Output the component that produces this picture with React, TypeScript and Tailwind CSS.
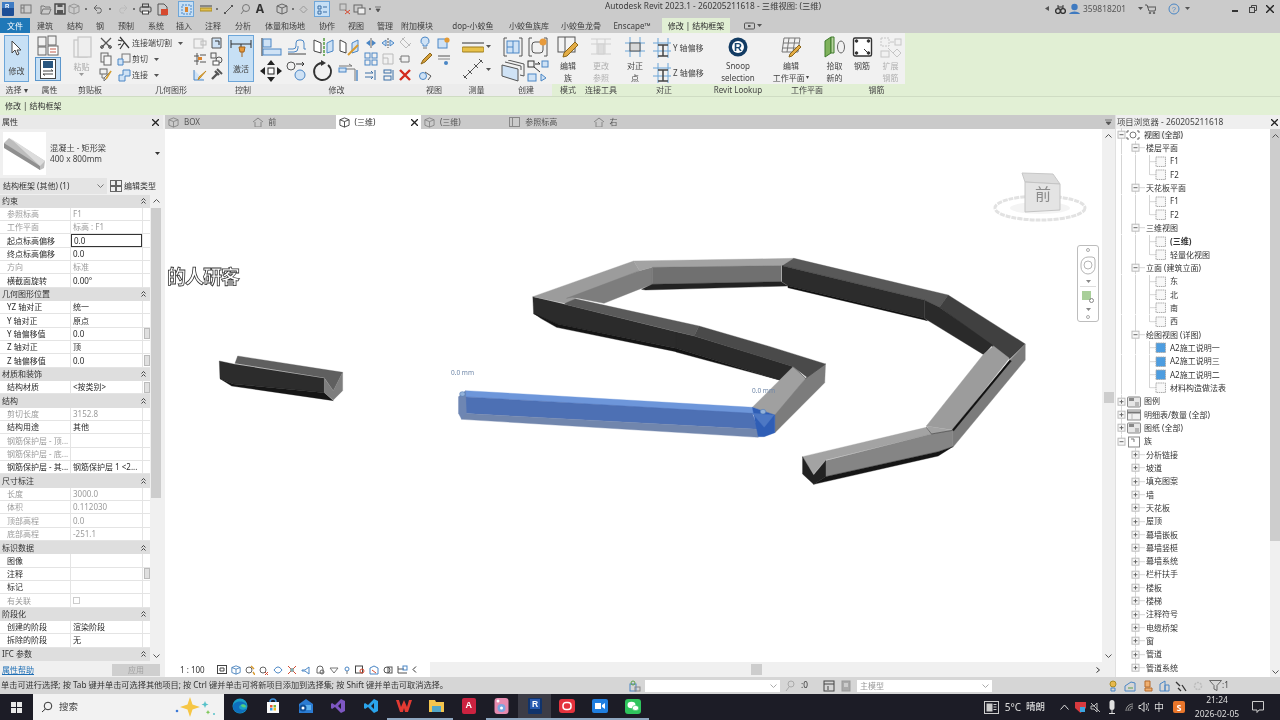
import React from "react";

const FONT = "font-['Noto_Sans','Noto_Sans_CJK_SC',sans-serif]";

type SP = { w?: number; h?: number; children?: React.ReactNode };
const G = ({ w = 14, h = 14, children }: SP) => (
  <svg width={w} height={h} viewBox={`0 0 ${w} ${h}`} className="shrink-0" fill="none" stroke="#555" strokeWidth="1">
    {children}
  </svg>
);
const B = "#4a86c5";
const LB = "#cfe2f5";
const Dot = () => <span className="mx-[1px] inline-block h-[2px] w-[2px] shrink-0 rounded-full bg-[#555]" />;
const Caret = ({ c = "#555" }: { c?: string }) => (
  <svg width="5" height="3" viewBox="0 0 5 3" className="shrink-0"><path d="M0 0h5L2.5 3z" fill={c} /></svg>
);

/* ---------- title bar ---------- */
const Cube = ({ s = 12, c = "#777" }: { s?: number; c?: string }) => (
  <svg width={s} height={s} viewBox="0 0 12 12" fill="none" stroke={c} className="shrink-0">
    <path d="M6 1l5 2v6l-5 2-5-2V3zM1 3l5 2 5-2M6 5v6" />
  </svg>
);

function QatBar() {
  const cell = (w: number, n: React.ReactNode, k: number) => (
    <div key={k} style={{ width: w }} className="flex shrink-0 items-center justify-center">{n}</div>
  );
  const items: [number, React.ReactNode][] = [
    [16, <svg width="12" height="14" viewBox="0 0 12 14"><rect width="12" height="14" rx="1" fill="#1d4f96" /><rect y="0" width="12" height="6" fill="#3f7cc4" /><text x="3" y="6" fontSize="6" fontFamily="Liberation Sans" fontWeight="700" fill="#fff">R</text></svg>],
    [20, <G w={12} h={12}><rect x="1" y="2" width="10" height="8" stroke="#777" /><path d="M4 2v8M1 5h3" stroke="#777" /></G>],
    [3, <span />],
    [13, <G w={12} h={11}><path d="M1 10V2h3l1 1h5v1M1 10l2-5h8l-2 5z" stroke="#777" /></G>],
    [15, <G w={12} h={12}><rect x="1" y="1" width="10" height="10" stroke="#444" strokeWidth="1.4" /><rect x="3.5" y="1" width="5" height="3" fill="#555" stroke="none" /><rect x="3" y="7" width="6" height="4" fill="#555" stroke="none" /></G>],
    [13, <Cube c="#999" />],
    [11, <Dot />],
    [14, <G w={12} h={10}><path d="M2 4h6a3 3 0 010 5H5M2 4l3-3M2 4l3 3" stroke="#666" /></G>],
    [9, <Dot />],
    [17, <G w={12} h={10}><path d="M10 4H4a3 3 0 000 5h3M10 4L7 1M10 4L7 7" stroke="#bbb" /></G>],
    [5, <Dot />],
    [18, <G w={13} h={12}><rect x="1" y="4" width="11" height="5" rx="1" stroke="#444" /><rect x="3.5" y="1" width="6" height="3" stroke="#444" /><rect x="3.5" y="8" width="6" height="3" stroke="#444" fill="#fff" /></G>],
    [16, <G w={13} h={13}><path d="M2 1h6l3 3v8H2z" stroke="#555" /><rect x="5" y="6" width="7" height="6" fill="#d6492f" stroke="none" /></G>],
    [8, <span />],
    [16, <div className="flex h-[16px] w-[16px] items-center justify-center border border-[#6fa6d8] bg-[#c6dff5]"><G w={11} h={11}><rect x="1" y="1" width="9" height="9" stroke="#4a86c5" strokeDasharray="2 1" /><rect x="4" y="3" width="3" height="5" fill="#d9832e" stroke="none" /></G></div>],
    [5, <span />],
    [13, <G w={12} h={8}><rect x="0" y="3" width="12" height="3" fill="#e3c04f" stroke="#a98b22" /><path d="M0 1h12" stroke="#444" /></G>],
    [9, <Dot />],
    [14, <G w={11} h={11}><path d="M1 10L10 1M1 8l2 2M8 1l2 2" stroke="#555" /></G>],
    [20, <G w={12} h={12}><circle cx="7" cy="5" r="3.5" stroke="#777" /><path d="M2 11l3-4" stroke="#777" /></G>],
    [10, <span className="text-[12px] leading-none font-bold text-[#333]">A</span>],
    [10, <span />],
    [13, <Cube c="#666" />],
    [9, <Dot />],
    [13, <G w={9} h={9}><path d="M4.5 1l3.5 3.5-3.5 3.5L1 4.5z" stroke="#999" /></G>],
    [4, <span />],
    [16, <div className="flex h-[16px] w-[16px] items-center justify-center border border-[#6fa6d8] bg-[#c6dff5]"><G w={11} h={11}><path d="M1 2h3v3H1zM1 7h3v3H1zM6 3h4M6 8h4" stroke="#3b6ea5" /></G></div>],
    [7, <span />],
    [15, <G w={12} h={12}><rect x="1" y="1" width="6" height="6" stroke="#888" /><path d="M6 7l5 4m0-4l-5 4" stroke="#d6492f" /></G>],
    [15, <G w={13} h={11}><rect x="1" y="1" width="8" height="7" stroke="#666" /><rect x="5" y="4" width="7" height="6" fill="#eee" stroke="#666" /></G>],
    [6, <Dot />],
    [10, <svg width="6" height="6" viewBox="0 0 6 6"><path d="M0 1h6M1 3h4l-2 3z" stroke="#555" fill="#555" strokeWidth=".7" /></svg>],
  ];
  return <div className="flex h-[18px] w-[400px] shrink-0 items-center">{items.map(([w, n], i) => cell(w, n, i))}</div>;
}

function TitleBar() {
  return (
    <div className="relative flex h-[18px] items-center bg-[#cbcbcb]">
      <QatBar />
      <div className="mb-[5px] ml-[205px] whitespace-nowrap text-[8.300px] leading-none text-[#3a3a3a]">Autodesk Revit 2023.1 - 260205211618 - 三维视图: (三维)</div>
      <div className="ml-auto flex items-center text-[8.400px] text-[#555]">
        <svg width="4" height="5" viewBox="0 0 4 5" className="mr-[6px]"><path d="M4 0v5L0 2.5z" fill="#555" /></svg>
        <G w={11} h={10}><circle cx="3" cy="7" r="2.4" stroke="#333" strokeWidth="1.4" /><circle cx="8" cy="7" r="2.4" stroke="#333" strokeWidth="1.4" /><path d="M3 1v4M8 1v4M3 3h5" stroke="#333" /></G>
        <svg width="11" height="12" viewBox="0 0 11 12" className="ml-[3px]"><circle cx="5.5" cy="4" r="3.2" fill="#3f7ac0" /><path d="M0 11c1-3.5 10-3.5 11 0z" fill="#3f7ac0" /></svg>
        <span className="ml-[3px] w-[55px]">359818201</span>
        <Caret />
        <span className="w-[2px]" />
        <G w={11} h={10}><path d="M0 1h2l2 6h6l1-4H3" stroke="#555" /><circle cx="5" cy="9" r=".8" /><circle cx="9" cy="9" r=".8" /></G>
        <span className="w-[12px]" />
        <svg width="12" height="12" viewBox="0 0 12 12"><circle cx="6" cy="6" r="5" fill="none" stroke="#4a86c5" /><text x="4" y="8.5" fontSize="7" fill="#4a86c5" fontFamily="Liberation Sans">?</text></svg>
        <span className="w-[5px]" />
        <Caret />
        <span className="w-[42px]" />
        <span className="mt-[4px] h-[1.5px] w-[6px] bg-[#333]" />
        <span className="w-[11px]" />
        <G w={8} h={8}><rect x=".5" y="2.5" width="5" height="5" stroke="#444" /><path d="M2.5 2.5V.5h5v5h-2" stroke="#444" /></G>
        <span className="w-[9px]" />
        <G w={8} h={8}><path d="M0 0l8 8M8 0L0 8" stroke="#222" strokeWidth="1.4" /></G>
        <span className="w-[6px]" />
      </div>
    </div>
  );
}

const TABS: [string, number][] = [
  ["建筑", 30], ["结构", 30], ["钢", 20], ["预制", 32], ["系统", 28], ["插入", 28], ["注释", 30], ["分析", 30],
  ["体量和场地", 54], ["协作", 30], ["视图", 28], ["管理", 30], ["附加模块", 34], ["dop-小蛟鱼", 78], ["小蛟鱼族库", 34],
  ["小蛟鱼龙骨", 70], ["Enscape™", 32],
];

function TabBar() {
  return (
    <div className="flex h-[15px] items-stretch bg-[#cbcbcb] text-[8px] leading-none text-[#3d3d3d]">
      <div className="flex w-[30px] items-center justify-center bg-[#1f78b8] pt-[1px] text-white">文件</div>
      {TABS.map(([t, w]) => (
        <div key={t} style={{ width: w }} className="flex shrink-0 items-center justify-center whitespace-nowrap pt-[1px]">{t}</div>
      ))}
      <div className="ml-[14px] flex w-[68px] items-center justify-center whitespace-nowrap bg-[#e1efd4] pt-[1px] text-[#2c2c2c]">修改 | 结构框架</div>
      <div className="ml-[14px] flex items-center gap-[2px]">
        <G w={11} h={8}><rect x=".5" y="1" width="10" height="6" rx="1" stroke="#555" /><rect x="4" y="3" width="2.5" height="2" fill="#555" stroke="none" /></G>
        <Caret />
      </div>
    </div>
  );
}

/* ---------- ribbon ---------- */
function Panel({ w, label, green, children }: { w: number; label: string; green?: boolean; children?: React.ReactNode }) {
  return (
    <div style={{ width: w }} className="flex shrink-0 flex-col">
      <div className="flex h-[51px] items-stretch overflow-hidden">{children}</div>
      <div className={`flex h-[12px] items-center justify-center whitespace-nowrap text-[8px] leading-none text-[#444] ${green ? "bg-[#e1efd4]" : "bg-[#ececec]"}`}>{label}</div>
    </div>
  );
}
const Col3 = ({ w = 17, items }: { w?: number; items: React.ReactNode[] }) => (
  <div style={{ width: w }} className="flex shrink-0 flex-col items-center pt-[2px]">
    {items.map((n, i) => <div key={i} className="flex h-[16px] items-center justify-center">{n}</div>)}
  </div>
);
const TallBtn = ({ w, children }: { w: number; children?: React.ReactNode }) => (
  <div style={{ width: w }} className="flex shrink-0 flex-col items-center pt-[3px] text-center text-[8px] leading-[11.5px] text-[#444]">{children}</div>
);

const Sm = {
  cutX: <G><path d="M2 2l10 10M12 2L2 12" stroke="#555" strokeWidth="1.3" /><circle cx="3" cy="11" r="1.4" /><circle cx="11" cy="11" r="1.4" /></G>,
  copy: <G><rect x="2" y="1" width="7" height="9" stroke="#666" /><rect x="5" y="4" width="7" height="9" fill="#f5f5f5" stroke="#666" /></G>,
  brush: <G><rect x="1" y="1" width="7" height="5" stroke="#666" /><path d="M3 6v4h3M12 3l-5 8-2 2 0-3z" stroke="#777" /><path d="M12 3l-5 8" stroke="#d9a02e" strokeWidth="1.5" /></G>,
  joinCut: <G><path d="M3 1l9 11M3 13l4-6M1 4l4 1M1 9l3-1" stroke="#333" strokeWidth="1.2" /></G>,
  cut: <G><rect x="5" y="2" width="8" height="8" stroke="#777" /><path d="M1 13V7h5v6z" fill="#cfe2f5" stroke={B} /></G>,
  join: <G><path d="M2 13V7h4V2h7v6H8v5z" fill={LB} stroke={B} /></G>,
  wallOpen: <G><rect x="1" y="3" width="9" height="9" stroke="#bbb" /><rect x="8" y="5" width="5" height="4" stroke="#bbb" /></G>,
  wallCut: <G><path d="M2 2h9v10H2z" fill={LB} stroke="#555" /><path d="M5 5h4v4" stroke="#333" /></G>,
  align2: <G><path d="M1 4h5M1 9h5M4 1v12M7 3h6M7 10h6" stroke="#555" /><rect x="5" y="5" width="4" height="3" fill="#d9832e" stroke="none" /></G>,
  cope: <G><rect x="1" y="1" width="5" height="5" stroke="#555" /><circle cx="9" cy="8" r="3" stroke="#555" /><rect x="3" y="9" width="6" height="4" stroke="#555" fill="#fff" /></G>,
  paint: <G><path d="M1 2v10h10" stroke={B} fill={LB} /><path d="M13 3L7 10l-2 2 1-3z" stroke="#c58a21" fill="#eab54a" /></G>,
  hammer: <G><path d="M5 3l4 4M2 11l5-5" stroke="#555" strokeWidth="2.4" /><path d="M7 1l5 5" stroke="#555" strokeWidth="2" /></G>,
  alignH: <G><path d="M6 4L2 7l4 3zM8 4l4 3-4 3z" fill={B} stroke="none" /><path d="M7 2v10" stroke="#666" /></G>,
  splitH: <G><path d="M5 4L1 7l4 3zM9 4l4 3-4 3z" fill={LB} stroke={B} /><path d="M7 2v10" stroke="#555" strokeDasharray="2 1" /></G>,
  grid4: <G><rect x="1" y="1" width="5" height="5" stroke={B} /><rect x="8" y="1" width="5" height="5" stroke={B} /><rect x="1" y="8" width="5" height="5" stroke={B} /><rect x="8" y="8" width="5" height="5" stroke={B} /></G>,
  groupDim: <G><path d="M2 2h10v10H2zM2 6h5v6" stroke="#bbb" /></G>,
  pinOut: <G><path d="M3 4h8v6H3zM3 7H1" stroke="#777" /></G>,
  arrR: <G><path d="M1 5h8l-2-2M1 9h8l-2 2M11 2v10" stroke="#3b6ea5" /></G>,
  arrD: <G><rect x="3" y="2" width="7" height="3" stroke="#3b6ea5" /><rect x="3" y="8" width="7" height="4" stroke="#3b6ea5" /><path d="M12 2v10" stroke="#3b6ea5" /></G>,
  delX: <G><path d="M2 2l10 10M12 2L2 12" stroke="#d32b1e" strokeWidth="2.4" /></G>,
  pinGray: <G><path d="M4 2l8 8M7 1L2 6l6 6 5-5" stroke="#bbb" /></G>,
  bulb: <G><path d="M7 1a4 4 0 00-2 7.5V10h4V8.5A4 4 0 007 1z" fill={LB} stroke={B} /><path d="M5 12h4" stroke="#777" /></G>,
  gear: <G><rect x="1" y="3" width="9" height="9" fill={LB} stroke={B} /><circle cx="10" cy="4" r="2.6" fill="#e39a33" stroke="none" /></G>,
  brushY: <G><path d="M12 1L5 8 3 12l4-2 7-7z" fill="#d6a03a" stroke="#8a651a" /></G>,
  lines: <G><path d="M1 4h12" stroke="#555" /><path d="M1 7h12" stroke="#888" /><circle cx="9" cy="11" r="2" fill="#4a86c5" stroke="none" /></G>,
  pipes: <G><circle cx="5" cy="8" r="3.5" fill={LB} stroke={B} /><path d="M7 4l6 4-3 4" stroke="#555" /></G>,
};

function Ribbon() {
  return (
    <div className="flex h-[63px] shrink-0 items-stretch bg-[#e1efd4] text-[8px]">
      <div className="flex bg-[#f1f1f1]">
        <Panel w={33} label="选择  ▾">
          <div className="mt-[2px] ml-[4px] flex h-[47px] w-[25px] flex-col items-center border border-[#6da6d9] bg-[#c7e0f5] pt-[4px] text-[8px] leading-none text-[#444]">
            <svg width="13" height="16" viewBox="0 0 13 16"><path d="M2 1v12l3-3 2 5 2-1-2-4h4z" fill="#fff" stroke="#444" /></svg>
            <span className="mt-[11px]">修改</span>
          </div>
        </Panel>
        <Panel w={33} label="属性">
          <div className="flex w-full flex-col items-center pt-[2px] pr-[4px]">
            <svg width="22" height="21" viewBox="0 0 22 21" fill="none" stroke="#666"><rect x="1" y="2" width="8" height="9" /><rect x="11" y="1" width="8" height="9" /><rect x="1" y="12" width="8" height="8" /><rect x="11" y="11" width="10" height="9" fill="#fff" /><path d="M13 14h6M13 17h6" stroke="#c15b4b" /></svg>
            <div className="mt-[1px] flex h-[24px] w-[26px] items-center justify-center border border-[#5b96cc] bg-[#c7e0f5]">
              <svg width="16" height="20" viewBox="0 0 16 20"><rect x=".5" y=".5" width="15" height="19" fill="#fff" stroke="#444" /><rect x="3" y="2" width="10" height="7" fill="#29567f" /><path d="M3 12h10l-2-1.5M13 15H3l2 1.5" stroke="#444" fill="none" /></svg>
            </div>
          </div>
        </Panel>
        <Panel w={48} label="剪贴板">
          <TallBtn w={31}>
            <svg width="20" height="24" viewBox="0 0 20 24" fill="none" stroke="#c8c8c8" strokeWidth="1.3"><rect x="2" y="4" width="13" height="17" /><rect x="6" y="1" width="13" height="20" fill="#eee" /></svg>
            <span className="mt-[1px] text-[#aaa]">粘贴</span>
            <Caret c="#999" />
          </TallBtn>
          <Col3 items={[Sm.cutX, Sm.copy, Sm.brush]} />
        </Panel>
        <Panel w={114} label="几何图形">
          <div className="flex w-[77px] shrink-0 flex-col pt-[2px] pl-[3px] text-[8px] leading-none text-[#444]">
            {[[Sm.joinCut, "连接端切割"], [Sm.cut, "剪切"], [Sm.join, "连接"]].map(([ic, t], i) => (
              <div key={i} className="flex h-[16px] items-center gap-[1px] whitespace-nowrap">
                {ic as React.ReactNode}<span>{t as string}</span><span className="ml-[5px]"><Caret /></span>
              </div>
            ))}
          </div>
          <Col3 items={[Sm.wallOpen, Sm.align2, Sm.paint]} />
          <Col3 items={[Sm.wallCut, Sm.cope, Sm.hammer]} />
        </Panel>
        <Panel w={30} label="控制">
          <div className="mt-[2px] flex h-[47px] w-[26px] flex-col items-center border border-[#6da6d9] bg-[#c7e0f5] pt-[2px] leading-none text-[#444]">
            <svg width="22" height="20" viewBox="0 0 22 20" fill="none"><path d="M1 2v8M21 2v8M1 6h20" stroke="#333" /><path d="M11 6v4" stroke="#333" /><path d="M9 9h6l-1 5h-4z" fill="#e79a3b" stroke="#a4631c" /><path d="M12 14v5" stroke="#a4631c" /></svg>
            <span className="mt-[7px]">激活</span>
          </div>
        </Panel>
        <Panel w={157} label="修改">
          <div className="flex w-[104px] shrink-0 flex-wrap content-start pt-[2px]">
            {[
              <svg width="22" height="20" viewBox="0 0 22 20" fill="none"><path d="M2 1v18" stroke="#333" /><rect x="3" y="2" width="8" height="8" fill={LB} stroke={B} /><rect x="3" y="12" width="18" height="6" fill={LB} stroke={B} /></svg>,
              <svg width="22" height="20" viewBox="0 0 22 20" fill="none" stroke={B}><path d="M2 12h5a3 3 0 003-3V6a3 3 0 013-3h2a3 3 0 013 3v6h2" /><path d="M2 17h18" stroke="#444" /><path d="M2 15h6a4 4 0 004-4V9" /></svg>,
              <svg width="22" height="20" viewBox="0 0 22 20" fill="none"><path d="M2 3l7 3v10l-7-2z" fill="#fff" stroke="#444" /><path d="M12 1v18" stroke="#5da04a" strokeWidth="1.6" strokeDasharray="3 1" /><path d="M15 6l6-3v11l-6 2z" fill={LB} stroke={B} /></svg>,
              <svg width="22" height="20" viewBox="0 0 22 20" fill="none"><path d="M2 3l6 3v10l-6-2z" fill="#fff" stroke="#444" /><path d="M14 6l6-3v11l-6 2z" fill={LB} stroke={B} /><path d="M20 8L10 18" stroke="#d89a2e" strokeWidth="2" /></svg>,
              <svg width="22" height="22" viewBox="0 0 22 22" fill="#222"><path d="M11 0l4 5H7zM11 22l-4-5h8zM0 11l5-4v8zM22 11l-5 4V7z" /><rect x="8" y="8" width="6" height="6" fill="#fff" stroke="#222" /></svg>,
              <svg width="22" height="22" viewBox="0 0 22 22" fill="none"><circle cx="5" cy="6" r="4" stroke="#555" /><circle cx="14" cy="15" r="5" fill={LB} stroke={B} /><path d="M10 4h8l-2-2m2 2l-2 2" stroke="#333" /></svg>,
              <svg width="22" height="22" viewBox="0 0 22 22" fill="none"><path d="M16 5a8.5 8.5 0 11-6-2" stroke="#333" strokeWidth="1.8" /><path d="M9 0l5 3-5 3z" fill="#333" /></svg>,
              <svg width="22" height="22" viewBox="0 0 22 22" fill="none"><path d="M1 6h13l-3-2M8 9h9v12" stroke="#777" /><rect x="1" y="8" width="7" height="4" fill={LB} stroke={B} /><path d="M19 10v11" stroke={B} strokeWidth="1.4" /></svg>,
            ].map((n, i) => (
              <div key={i} className="flex h-[24px] w-[26px] items-center justify-center">{n}</div>
            ))}
          </div>
          <Col3 items={[Sm.alignH, Sm.grid4, Sm.arrR]} />
          <Col3 items={[Sm.splitH, Sm.groupDim, Sm.arrD]} />
          <Col3 items={[Sm.pinGray, Sm.pinOut, Sm.delX]} />
        </Panel>
        <Panel w={38} label="视图">
          <Col3 w={19} items={[Sm.bulb, Sm.brushY, Sm.pipes]} />
          <Col3 w={19} items={[Sm.gear, Sm.lines, <span />]} />
        </Panel>
        <Panel w={47} label="测量">
          <div className="flex w-full flex-col items-center gap-[5px] pt-[7px]">
            <div className="flex items-center gap-[2px]">
              <svg width="22" height="13" viewBox="0 0 22 13"><path d="M0 3h22" stroke="#333" /><rect x="0" y="7" width="22" height="5" rx="1" fill="#e8c14a" stroke="#9c7d1f" /></svg>
              <Caret />
            </div>
            <div className="flex items-center gap-[2px]">
              <svg width="22" height="22" viewBox="0 0 22 22" fill="none" stroke="#555"><path d="M2 20L20 2M1 17l4 4M17 1l4 4M6 12l4 4M12 6l4 4" /></svg>
              <Caret />
            </div>
          </div>
        </Panel>
        <Panel w={52} label="创建">
          <div className="flex flex-col items-center pt-[2px]">
            <div className="flex h-[24px] w-[26px] items-center justify-center">
              <svg width="20" height="20" viewBox="0 0 20 20" fill="none"><path d="M4 1H1v18h3M16 1h3v18h-3" stroke="#555" /><rect x="4" y="4" width="12" height="12" fill={LB} stroke={B} /><path d="M10 4v12M4 10h6" stroke={B} /></svg>
            </div>
            <div className="flex h-[24px] w-[26px] items-center justify-center">
              <svg width="24" height="22" viewBox="0 0 24 22" fill="none"><path d="M1 5l16 4v12L1 16z" fill={LB} stroke="#555" /><path d="M4 2l16 4v4M7 0l16 4v12l-4-1" stroke="#555" /></svg>
            </div>
          </div>
          <div className="flex flex-col items-center pt-[2px]">
            <div className="flex h-[24px] w-[24px] items-center justify-center">
              <svg width="20" height="20" viewBox="0 0 20 20" fill="none"><path d="M4 1H1v18h3M16 1h3v18h-3" stroke="#555" /><rect x="4" y="5" width="11" height="11" rx="3" stroke="#555" /><circle cx="15" cy="5" r="3.5" fill="#e79a3b" /></svg>
            </div>
            <div className="flex h-[24px] w-[24px] items-center justify-center">
              <svg width="22" height="22" viewBox="0 0 22 22" fill="none"><rect x="1" y="1" width="6" height="6" stroke="#333" /><path d="M8 4h5l-2-2" stroke="#333" /><rect x="15" y="1" width="6" height="6" fill={LB} stroke={B} /><rect x="1" y="14" width="8" height="7" fill={LB} stroke={B} /><path d="M14 14l5 4-5 3z" fill={LB} stroke={B} /><path d="M7 7l6 5" stroke="#333" /></svg>
            </div>
          </div>
        </Panel>
        <Panel w={32} green label="模式">
          <TallBtn w={32}>
            <svg width="22" height="22" viewBox="0 0 22 22" fill="none"><rect x="1" y="1" width="17" height="15" fill="#f4f4f4" stroke="#555" /><path d="M8 1v15" stroke="#555" /><path d="M21 9L10 20l-4 1 1-4L18 6z" fill="#e4ad45" stroke="#8a651a" /></svg>
            <span className="mt-[2px]">编辑</span><span>族</span>
          </TallBtn>
        </Panel>
        <Panel w={34} green label="连接工具">
          <TallBtn w={34}>
            <svg width="24" height="22" viewBox="0 0 24 22" fill="none" stroke="#cfcfcf"><path d="M2 3h20M2 8h20M2 18h20M8 3v15M16 3v15" /><rect x="9" y="8" width="6" height="10" fill="#ddd" /></svg>
            <span className="mt-[2px] text-[#b0b0b0]">更改</span><span className="text-[#b0b0b0]">参照</span>
          </TallBtn>
        </Panel>
        <Panel w={92} green label="对正">
          <TallBtn w={34}>
            <svg width="22" height="22" viewBox="0 0 22 22" fill="none"><path d="M1 7h20M1 15h20M6 1v20M16 1v20" stroke="#6aa5d8" /><rect x="6" y="7" width="10" height="8" fill="#d8d8d8" stroke="#555" /></svg>
            <span className="mt-[2px]">对正</span><span>点</span>
          </TallBtn>
          <div className="flex flex-col gap-[3px] pt-[4px] whitespace-nowrap leading-none text-[#444]">
            <div className="flex items-center gap-[1px]">
              <svg width="20" height="22" viewBox="0 0 20 22" fill="none"><path d="M1 6h18M1 14h18M6 1v20M16 1v20" stroke="#6aa5d8" /><path d="M6 8h10M11 8v11M6 19h10" stroke="#444" strokeWidth="1.5" /></svg>
              <span>Y 轴偏移</span>
            </div>
            <div className="flex items-center gap-[1px]">
              <svg width="20" height="22" viewBox="0 0 20 22" fill="none"><path d="M1 6h18M1 14h18M6 1v20M16 1v20" stroke="#6aa5d8" /><path d="M6 8h10M11 8v11M6 19h10" stroke="#444" strokeWidth="1.5" /></svg>
              <span>Z 轴偏移</span>
            </div>
          </div>
        </Panel>
        <Panel w={56} green label="Revit Lookup">
          <TallBtn w={56}>
            <svg width="20" height="22" viewBox="0 0 20 22"><circle cx="10" cy="11" r="9.5" fill="#123b63" /><circle cx="10" cy="11" r="6" fill="#ffffff" /><text x="6" y="15" fontSize="11" fontWeight="700" fontFamily="Liberation Sans" fill="#17466f">R</text></svg>
            <span className="mt-[2px]">Snoop</span><span>selection</span>
          </TallBtn>
        </Panel>
        <Panel w={82} green label="工作平面">
          <TallBtn w={50}>
            <svg width="22" height="22" viewBox="0 0 22 22" fill="none" stroke="#777"><path d="M4 2h16l-2 14H2zM9 2L7 16M15 2l-2 14M3 7h16M2.500 12h16" /><path d="M21 11L12 20l-3 1 1-3 9-9z" fill="#e4ad45" stroke="#8a651a" /></svg>
            <span className="mt-[2px]">编辑</span><span className="whitespace-nowrap">工作平面<span className="text-[6px] align-top"> ▾</span></span>
          </TallBtn>
          <span className="w-[5px] shrink-0" />
          <TallBtn w={27}>
            <svg width="24" height="22" viewBox="0 0 24 22" fill="none"><path d="M2 5l6-4v16l-6 4z" fill="#7fb25c" stroke="#3f7a2c" /><path d="M8 1h3v16H8z" fill="#b7d49d" stroke="#3f7a2c" /><ellipse cx="18" cy="11" rx="3.500" ry="6" stroke="#666" /></svg>
            <span className="mt-[2px]">拾取</span><span>新的</span>
          </TallBtn>
        </Panel>
        <Panel w={57} green label="钢筋">
          <TallBtn w={28}>
            <svg width="21" height="22" viewBox="0 0 21 22" fill="#fff" stroke="#333"><rect x="1.500" y="2" width="18" height="18" rx="1.500" strokeWidth="1.4" /><circle cx="4.500" cy="5" r="1.300" fill="#333" /><circle cx="16.500" cy="5" r="1.300" fill="#333" /><circle cx="4.500" cy="17" r="1.300" fill="#333" /><circle cx="16.500" cy="17" r="1.300" fill="#333" /><path d="M12 13l4 4" /></svg>
            <span className="mt-[2px]">钢筋</span>
          </TallBtn>
          <TallBtn w={29}>
            <svg width="22" height="22" viewBox="0 0 22 22" fill="none" stroke="#c6c6c6"><rect x="1" y="2" width="8" height="8" strokeDasharray="2 1" /><rect x="15" y="3" width="6" height="6" /><path d="M10 6h4M8 12l5 5" /><rect x="1" y="15" width="8" height="6" /><path d="M17 13l4 4-4 4-4-4z" /></svg>
            <span className="mt-[2px] text-[#b0b0b0]">扩展</span><span className="text-[#b0b0b0]">钢筋</span>
          </TallBtn>
        </Panel>
      </div>
      <div className="flex-1" />
    </div>
  );
}

/* ---------- properties ---------- */
type Row = { l: string; v?: string; dim?: boolean; thumb?: boolean; active?: boolean; check?: boolean };
const PROPS: { g: string; rows: Row[] }[] = [
  { g: "约束", rows: [
    { l: "参照标高", v: "F1", dim: true }, { l: "工作平面", v: "标高 : F1", dim: true }, { l: "起点标高偏移", v: "0.0", active: true },
    { l: "终点标高偏移", v: "0.0" }, { l: "方向", v: "标准", dim: true }, { l: "横截面旋转", v: "0.00°" } ] },
  { g: "几何图形位置", rows: [
    { l: "YZ 轴对正", v: "统一" }, { l: "Y 轴对正", v: "原点" }, { l: "Y 轴偏移值", v: "0.0", thumb: true }, { l: "Z 轴对正", v: "顶" }, { l: "Z 轴偏移值", v: "0.0", thumb: true } ] },
  { g: "材质和装饰", rows: [{ l: "结构材质", v: "<按类别>", thumb: true }] },
  { g: "结构", rows: [
    { l: "剪切长度", v: "3152.8", dim: true }, { l: "结构用途", v: "其他" }, { l: "钢筋保护层 - 顶...", dim: true }, { l: "钢筋保护层 - 底...", dim: true }, { l: "钢筋保护层 - 其...", v: "钢筋保护层 1 <2..." } ] },
  { g: "尺寸标注", rows: [
    { l: "长度", v: "3000.0", dim: true }, { l: "体积", v: "0.112030", dim: true }, { l: "顶部高程", v: "0.0", dim: true }, { l: "底部高程", v: "-251.1", dim: true } ] },
  { g: "标识数据", rows: [{ l: "图像" }, { l: "注释", thumb: true }, { l: "标记" }, { l: "有关联", dim: true, check: true }] },
  { g: "阶段化", rows: [{ l: "创建的阶段", v: "渲染阶段" }, { l: "拆除的阶段", v: "无" }] },
];
const Chev = ({ up = true, c = "#555" }: { up?: boolean; c?: string }) => (
  <svg width="7" height="4" viewBox="0 0 7 4" fill="none" stroke={c} className="shrink-0"><path d={up ? "M.5 3.500L3.500 .5l3 3" : "M.5 .5l3 3 3-3"} /></svg>
);
const DoubleUp = () => (
  <svg width="5" height="6" viewBox="0 0 5 6" fill="none" stroke="#333" strokeWidth=".9" className="shrink-0"><path d="M.5 2.500l2-2 2 2M.5 5.500l2-2 2 2" /></svg>
);

function GroupHead({ t }: { t: string }) {
  return (
    <div className="flex h-[13.34px] items-center bg-[#dedede] pr-[4px] pl-[2px] text-[8px] leading-none text-[#333]">
      <span className="flex-1 whitespace-nowrap">{t}</span>
      <DoubleUp />
    </div>
  );
}

function Properties() {
  return (
    <div className="flex w-[163px] shrink-0 flex-col bg-[#f0f0f0] text-[8px] leading-none">
      <div className="flex h-[14px] items-center justify-between bg-[#e9e9e9] px-[2px] pr-[4px] text-[#333]">
        <span>属性</span>
        <G w={7} h={7}><path d="M0 0l7 7M7 0L0 7" stroke="#222" strokeWidth="1.300" /></G>
      </div>
      <div className="flex h-[49px] shrink-0 items-center pl-[3px]">
        <div className="flex h-[43px] w-[43px] shrink-0 items-center justify-center bg-white">
          <svg width="43" height="33" viewBox="0 0 43 33"><path d="M1 6l5-5 36 23-1 7-4 2z" fill="#bdbdbd" /><path d="M1 6l36 23v4L1 11z" fill="#8f8f8f" /><path d="M7 1l35 23-5 5z" fill="#dcdcdc" /></svg>
        </div>
        <div className="ml-[4px] flex-1 text-[8.200px] leading-[10.500px] text-[#444]">混凝土 - 矩形梁<br />400 x 800mm</div>
        <span className="mr-[3px]"><Caret c="#333" /></span>
      </div>
      <div className="flex h-[16.500px] shrink-0 items-center">
        <div className="flex h-[16px] w-[107px] items-center justify-between bg-[#e4e4e4] px-[3px] text-[#333]">
          <span className="whitespace-nowrap">结构框架 (其他) (1)</span>
          <Chev up={false} c="#777" />
        </div>
        <div className="ml-[3px] flex items-center gap-[2px] whitespace-nowrap text-[#333]">
          <svg width="12" height="12" viewBox="0 0 12 12" fill="none" stroke="#666"><rect x=".5" y=".5" width="5" height="5" /><rect x="6.500" y=".5" width="5" height="5" /><rect x=".5" y="6.500" width="5" height="5" /><rect x="6.500" y="6.500" width="5" height="5" /></svg>
          <span>编辑类型</span>
        </div>
      </div>
      <div className="flex min-h-0 flex-1">
        <div className="w-[150px] shrink-0">
          {PROPS.map(({ g, rows }) => (
            <div key={g}>
              <GroupHead t={g} />
              {rows.map((r) => (
                <div key={r.l} className={`flex h-[13.34px] items-stretch border-b border-[#e4e4e4] bg-white ${r.dim ? "text-[#9b9b9b]" : "text-[#2a2a2a]"}`}>
                  <div className="flex w-[71px] shrink-0 items-center overflow-hidden border-r border-[#e4e4e4] pl-[7px] whitespace-nowrap">{r.l}</div>
                  <div className={`flex w-[71px] shrink-0 items-center overflow-hidden pl-[2px] whitespace-nowrap ${r.active ? "border border-[#333]" : ""}`}>
                    {r.check ? <span className="h-[7px] w-[7px] border border-[#ccc]" /> : r.v}
                  </div>
                  <div className="flex w-[8px] shrink-0 items-center justify-center border-l border-[#e4e4e4]">
                    {r.thumb && <span className="h-[11px] w-[6px] border border-[#bbb] bg-[#e0e0e0]" />}
                  </div>
                </div>
              ))}
            </div>
          ))}
          <GroupHead t="IFC 参数" />
        </div>
        <div className="flex w-[12px] shrink-0 flex-col items-center pr-[1px] pl-[1px]">
          <div className="flex h-[13px] items-center"><Chev /></div>
          <div className="h-[290px] w-full bg-[#cdcdcd]" />
          <div className="flex-1" />
          <div className="flex h-[13px] items-center"><Chev up={false} /></div>
        </div>
      </div>
      <div className="flex h-[15px] shrink-0 items-center justify-between bg-[#f0f0f0] pr-[3px] pl-[2px]">
        <span className="text-[#1f6fb5] underline">属性帮助</span>
        <span className="flex h-[12px] w-[48px] items-center justify-center bg-[#cfcfcf] text-[#a0a0a0]">应用</span>
      </div>
    </div>
  );
}

/* ---------- view ---------- */
const VTabs: { t: string; k: "cube" | "home" | "sheet"; a?: boolean }[] = [
  { t: "BOX", k: "cube" }, { t: "前", k: "home" }, { t: "(三维)", k: "cube", a: true }, { t: "(三维)", k: "cube" }, { t: "参照标高", k: "sheet" }, { t: "右", k: "home" },
];
const TabIcon = ({ k, c }: { k: string; c: string }) =>
  k === "cube" ? <Cube s={11} c={c} /> :
  k === "home" ? <svg width="10" height="10" viewBox="0 0 10 10" fill="none" stroke={c}><path d="M0 5l5-4 5 4M2 5v5h6V5" /></svg> :
  <svg width="11" height="10" viewBox="0 0 11 10" fill="none" stroke={c}><rect x=".5" y=".5" width="10" height="9" /><path d="M3.500 .5v9" /></svg>;

function ViewTabs() {
  return (
    <div className="flex h-[14px] shrink-0 bg-[#cacaca] text-[8px] leading-none text-[#555]">
      {VTabs.map((t, i) => (
        <div key={i} className={`flex w-[85.300px] shrink-0 items-center pl-[3px] whitespace-nowrap ${t.a ? "bg-white text-[#333]" : ""}`}>
          <TabIcon k={t.k} c={t.a ? "#444" : "#888"} />
          <span className="ml-[5px]">{t.t}</span>
          {t.a && <span className="mr-[3px] ml-auto"><G w={7} h={7}><path d="M0 0l7 7M7 0L0 7" stroke="#222" strokeWidth="1.300" /></G></span>}
        </div>
      ))}
      <div className="ml-auto flex w-[13px] items-center justify-center">
        <svg width="7" height="6" viewBox="0 0 7 6"><path d="M0 1h7M1 3h5L3.500 6z" stroke="#555" fill="#555" strokeWidth=".7" /></svg>
      </div>
    </div>
  );
}

const P = ({ p, f }: { p: string; f: string }) => <polygon points={p} fill={f} stroke={f} strokeWidth="1" />;

function Model() {
  return (
    <svg className="absolute top-0 left-0" width="935" height="533" viewBox="165 129 935 533">
      <g transform="translate(430 250) scale(.3955 .3333)">
        <P p="260,140 340,163 622,245 622,295 320,222 262,192" f="#2b2b2b" />
        <P p="265,192 322,222 622,295 622,305 320,232 280,205" f="#151515" />
        <P p="622,245 668,258 920,350 885,390 622,295" f="#2a2a2a" />
        <P p="622,295 885,390 890,392 622,306" f="#141414" />
        <P p="350,142 680,228 668,258 340,163" f="#5a5a5a" />
        <P p="680,228 860,290 1000,342 960,388 918,350 668,258" f="#4a4a4a" />
        <P p="260,140 515,33 530,62 340,160" f="#9c9c9c" />
        <P p="345,145 530,62 562,52 562,103 520,122 440,160 360,142" f="#7d7d7d" />
        <P p="515,33 920,25 888,47 562,52 530,62" f="#a3a3a3" />
        <P p="562,52 888,47 888,95 562,103" f="#707070" />
        <P p="535,118 562,103 888,95 905,108 545,120" f="#222222" />
        <P p="920,25 1310,135 1288,172 1250,150 890,47" f="#585858" />
        <P p="890,47 1250,150 1250,205 905,107 890,95" f="#2c2c2c" />
        <P p="905,107 1250,205 1258,212 905,113" f="#111111" />
        <P p="1310,135 1505,282 1465,328 1288,172" f="#404040" />
        <P p="1250,150 1288,172 1422,285 1400,314 1250,205" f="#2a2a2a" />
        <P p="1425,288 1465,325 1322,540 1255,528 1400,312" f="#9c9c9c" />
        <P p="1505,282 1505,330 1322,592 1322,542 1468,328" f="#7b7b7b" />
        <P p="1466,330 1470,333 1324,543 1320,540" f="#111111" />
        <P p="942,620 1255,532 1268,552 1000,630 970,672" f="#a3a3a3" />
        <P p="1255,528 1322,541 1268,552" f="#a3a3a3" />
        <P p="1000,632 1268,552 1322,541 1322,590 1285,605 1000,680" f="#858585" />
        <P p="942,620 970,675 1000,632 1000,680 970,703 942,672" f="#222222" />
        <P p="1000,680 1285,605 1322,590 1285,618 970,703" f="#151515" />
        <polyline points="1255,532 1268,552 1322,541" fill="none" stroke="#333" strokeWidth="1.500" />
        <polyline points="1000,632 1000,680" fill="none" stroke="#222" strokeWidth="1.500" />
        <P p="918,350 950,385 875,497 815,472 880,395" f="#a0a0a0" />
        <P p="1000,342 998,398 872,548 872,495 950,385" f="#7c7c7c" />
        <polyline points="1000,342 950,385 918,350" fill="none" stroke="#333" strokeWidth="1.500" />
        <P p="90,422 815,472 822,493 80,440" f="#6d96da" />
        <P p="80,440 815,490 830,538 82,490" f="#4d70b4" />
        <P p="80,490 830,538 830,562 80,508" f="#7186ad" />
        <P p="72,440 90,422 92,490 80,508 72,490" f="#6e86b3" />
        <P p="815,472 872,495 872,548 845,560 830,560" f="#2f5eb6" />
        <P p="815,490 870,495 845,532" f="#4d78c4" />
        <circle cx="82" cy="432" r="7" fill="#93b2da" stroke="#4a74b0" strokeWidth="1.500" />
        <circle cx="842" cy="485" r="7" fill="#93b2da" stroke="#4a74b0" strokeWidth="1.500" />
      </g>
      <g transform="translate(165 110) scale(.3333)">
        <P p="210,760 218,738 533,787 505,842 478,803" f="#5f5f5f" />
        <P p="163,753 205,762 478,805 478,848 205,822 165,806" f="#2c2c2c" />
        <P p="165,806 205,822 478,848 505,872 200,828" f="#161616" />
        <P p="478,805 505,842 533,787 533,842 505,870 478,848" f="#7e7e7e" />
      </g>
      <ellipse cx="1040" cy="208" rx="45" ry="12" fill="none" stroke="#e2e2e2" strokeWidth="3" strokeDasharray="5 1" />
      <ellipse cx="1040" cy="208" rx="30" ry="6" fill="#f4f4f4" />
      <path d="M1022 173l31 1 7 10-35 -2z" fill="#dcdcdc" stroke="#c8c8c8" />
      <path d="M1025 182l35 2v26l-35 2z" fill="#e4e4e4" stroke="#c4c4c4" />
    </svg>
  );
}

function Canvas() {
  return (
    <div className="relative min-h-0 flex-1 overflow-hidden bg-white">
      <Model />
      <div className="absolute top-[139px] left-[2px] text-[19px] leading-none font-bold tracking-[-1px] whitespace-nowrap text-white [-webkit-text-stroke:0.8px_#333]">的人研客</div>
      <div className="absolute top-[241px] left-[286px] text-[6.500px] leading-none whitespace-nowrap text-[#6f87a8]">0.0 mm</div>
      <div className="absolute top-[259px] left-[587px] text-[6.500px] leading-none whitespace-nowrap text-[#6f87a8]">0.0 mm</div>
      <div className="absolute top-[57px] left-[870px] text-[16px] leading-none text-[#8c8c8c]">前</div>
      <div className="absolute top-[116px] left-[912px] flex h-[77px] w-[22px] flex-col items-center justify-between rounded-[3px] border border-[#bdbdbd] bg-white py-[2px]">
        <span className="h-[4px] w-[4px] rounded-full border border-[#aaa]" />
        <svg width="16" height="20" viewBox="0 0 16 20" fill="none" stroke="#b5b5b5"><path d="M8 1h4a3 3 0 013 3v7a7 7 0 01-14 0V8a7 7 0 017-7z" /><circle cx="8" cy="9" r="4" /></svg>
        <Caret c="#888" />
        <span className="h-px w-[16px] bg-[#ddd]" />
        <svg width="13" height="13" viewBox="0 0 13 13"><rect width="9" height="9" fill="#a9cf9a" /><circle cx="9.500" cy="9.500" r="2" fill="none" stroke="#888" /></svg>
        <Caret c="#888" />
        <span className="h-[4px] w-[4px] rounded-full border border-[#aaa]" />
      </div>
    </div>
  );
}

const VIcons = [
  <G w={10} h={9}><rect x=".5" y=".5" width="9" height="8" stroke="#444" /><path d="M3 3h4v3H3z" stroke="#444" /></G>,
  <Cube s={10} c="#3a78b8" />,
  <G w={10} h={10}><circle cx="4" cy="5" r="3" stroke="#666" /><path d="M6 1l3 3M8 7l2 3" stroke="#d89a2e" strokeWidth="1.500" /></G>,
  <G w={10} h={10}><circle cx="4" cy="5" r="3" stroke="#666" /><path d="M6 7l3 3m0-3l-3 3" stroke="#d6492f" /></G>,
  <G w={10} h={10}><path d="M1 5c3-4 5-4 8 0-3 4-5 4-8 0z" stroke="#4a86c5" /></G>,
  <G w={10} h={10}><path d="M1 9l8-8M1 1l8 8" stroke="#d6492f" /><circle cx="5" cy="5" r="2" fill="#8aa" stroke="none" /></G>,
  <G w={10} h={10}><path d="M1 5h3l4-3v7L4 6H1z" stroke="#4a86c5" /></G>,
  <G w={10} h={10}><path d="M2 4a3 3 0 016 0v4H2z" stroke="#666" /><circle cx="7" cy="7" r="2" stroke="#666" /></G>,
  <G w={10} h={10}><path d="M1 3l4 5 4-5z" stroke="#777" /></G>,
  <G w={8} h={10}><circle cx="4" cy="4" r="2" stroke="#4a86c5" /><path d="M4 6v3" stroke="#777" /></G>,
  <G w={10} h={9}><rect x=".5" y="1" width="7" height="7" stroke="#444" /><circle cx="7" cy="6" r="2" stroke="#d6492f" /></G>,
  <G w={10} h={10}><path d="M1 9V3l4-2 4 2v6z" stroke="#4a86c5" /><path d="M3 5l4 3" stroke="#d6492f" /></G>,
  <G w={10} h={10}><circle cx="4" cy="5" r="3" stroke="#555" /><rect x="5" y="2" width="4" height="6" stroke="#555" /></G>,
  <G w={11} h={9}><path d="M1 1v7h9M1 4h6" stroke="#555" /><rect x="6" y="1" width="4" height="4" stroke="#4a86c5" /></G>,
  <svg width="5" height="7" viewBox="0 0 5 7" fill="none" stroke="#333"><path d="M4 .5L1 3.500l3 3" /></svg>,
];

function Center() {
  return (
    <div className="flex min-w-0 flex-1 flex-col bg-[#f0f0f0] pl-[2px]">
      <ViewTabs />
      <div className="flex min-h-0 flex-1">
        <div className="flex min-w-0 flex-1 flex-col">
          <Canvas />
          <div className="flex h-[15px] shrink-0 items-center bg-[#f0f0f0]">
            <div className="flex h-full w-[265px] shrink-0 items-center bg-white pl-[15px] text-[8px] text-[#333]">
              <span className="w-[37px] shrink-0 whitespace-nowrap">1 : 100</span>
              <span className="flex items-center gap-[4px]">{VIcons.map((n, i) => <span key={i} className="flex">{n}</span>)}</span>
            </div>
            <div className="ml-[321px] h-[11px] w-[11px] bg-[#cdcdcd]" />
            <div className="ml-auto flex w-[8px] justify-center">
              <svg width="4" height="6" viewBox="0 0 4 6" fill="none" stroke="#333"><path d="M.5 .5l3 2.500-3 2.500" /></svg>
            </div>
          </div>
        </div>
        <div className="flex w-[13px] shrink-0 flex-col items-center bg-[#f0f0f0]">
          <div className="flex h-[13px] items-center"><Chev /></div>
          <div className="mt-[250px] h-[11px] w-[10px] bg-[#cdcdcd]" />
          <div className="flex-1" />
          <div className="flex h-[13px] items-center"><Chev up={false} /></div>
          <div className="h-[15px]" />
        </div>
      </div>
    </div>
  );
}

/* ---------- project browser ---------- */
type Node = { t: string; l: 0 | 1 | 2; k?: "open" | "closed"; icon?: "view" | "blue" | "sq" | "doc" | "fam" | "tab"; bold?: boolean; last?: boolean; sel?: boolean };
const TREE: Node[] = [
  { t: "视图 (全部)", l: 0, k: "open", icon: "view", sel: true },
  { t: "楼层平面", l: 1, k: "open" }, { t: "F1", l: 2 }, { t: "F2", l: 2, last: true },
  { t: "天花板平面", l: 1, k: "open" }, { t: "F1", l: 2 }, { t: "F2", l: 2, last: true },
  { t: "三维视图", l: 1, k: "open" }, { t: "(三维)", l: 2, bold: true }, { t: "轻量化视图", l: 2, last: true },
  { t: "立面 (建筑立面)", l: 1, k: "open" }, { t: "东", l: 2 }, { t: "北", l: 2 }, { t: "南", l: 2 }, { t: "西", l: 2, last: true },
  { t: "绘图视图 (详图)", l: 1, k: "open" }, { t: "A2施工说明一", l: 2, icon: "blue" }, { t: "A2施工说明三", l: 2, icon: "blue" }, { t: "A2施工说明二", l: 2, icon: "blue" }, { t: "材料构造做法表", l: 2, last: true },
  { t: "图例", l: 0, k: "closed", icon: "doc" }, { t: "明细表/数量 (全部)", l: 0, k: "closed", icon: "tab" }, { t: "图纸 (全部)", l: 0, k: "closed", icon: "doc" },
  { t: "族", l: 0, k: "open", icon: "fam" },
  ...["分析链接", "坡道", "填充图案", "墙", "天花板", "屋顶", "幕墙嵌板", "幕墙竖梃", "幕墙系统", "栏杆扶手", "楼板", "楼梯", "注释符号", "电缆桥架", "窗", "管道", "管道系统"].map((t) => ({ t, l: 1 as const, k: "closed" as const })),
];

const Exp = ({ x, open }: { x: number; open: boolean }) => (
  <g>
    <rect x={x - 3.500} y="3.200" width="7" height="7" fill="#f8f8f8" stroke="#bbb" />
    <path d={`M${x - 2} 6.700h4`} stroke="#666" />
    {!open && <path d={`M${x} 4.700v4`} stroke="#666" />}
  </g>
);

function TreeRow({ n, idx, famIdx }: { n: Node; idx: number; famIdx: number }) {
  const gw = n.l === 0 ? 27 : n.l === 1 ? 29 : 54;
  const preFam = idx < famIdx;
  return (
    <div className="flex h-[13.34px] items-center whitespace-nowrap">
      <svg width={gw} height="13.34" viewBox={`0 0 ${gw} 13.34`} className="shrink-0" fill="none">
        {preFam && <path d="M5.500 0v13.340" stroke="#d5d5d5" />}
        {idx === famIdx && <path d="M5.500 0v6" stroke="#d5d5d5" />}
        {n.l >= 1 && idx < 20 && <path d="M19.500 0v13.340" stroke="#d5d5d5" />}
        {n.l >= 1 && idx > famIdx && <path d={`M19.500 0v${idx === TREE.length - 1 ? 7 : 13.34}`} stroke="#d5d5d5" />}
        {n.l === 1 && <path d="M20 6.700h9" stroke="#d5d5d5" />}
        {n.l === 2 && <path d={`M33.500 0v${n.last ? 7 : 13.34}`} stroke="#d5d5d5" />}
        {n.l === 2 && <path d="M34 6.700h6" stroke="#d5d5d5" />}
        {n.l === 0 && <Exp x={5.500} open={n.k === "open"} />}
        {n.l === 1 && <Exp x={19.500} open={n.k === "open"} />}
        {n.l === 2 && <rect x="40" y="2" width="9.500" height="9.500" fill={n.icon === "blue" ? "#4d9de0" : "#f8f8f8"} stroke="#aaa" strokeDasharray="1.500 .7" />}
        {n.l === 0 && n.icon === "view" && <path d="M13 3h-2v2M21 3h2v2M13 11h-2v-2M21 11h2v-2" stroke="#666" />}
        {n.l === 0 && n.icon === "view" && <circle cx="17" cy="7" r="3" stroke="#777" />}
        {n.l === 0 && n.icon === "doc" && <g><rect x="11.500" y="2" width="13" height="10" rx="1" fill="#e6e6e6" stroke="#888" /><rect x="13" y="3" width="5" height="3" fill="#888" /><path d="M19 8h4M19 10h4" stroke="#888" /></g>}
        {n.l === 0 && n.icon === "tab" && <g><rect x="11.500" y="2" width="13" height="10" fill="#f0f0f0" stroke="#888" /><path d="M11.500 4.500h13" stroke="#777" strokeWidth="2" /><path d="M16 5v7" stroke="#bbb" /></g>}
        {n.l === 0 && n.icon === "fam" && <g><rect x="12.500" y="2" width="11" height="10" fill="#fff" stroke="#888" /><path d="M15 4h3v3" stroke="#777" /></g>}
      </svg>
      <span className={`text-[8px] leading-none ${n.bold ? "font-bold" : ""} ${n.sel ? "bg-[#eeeeee]" : ""} ${n.l === 2 ? "ml-0" : "ml-[1px]"} text-[#333]`}>{n.t}</span>
    </div>
  );
}

function Browser() {
  const famIdx = TREE.findIndex((n) => n.t === "族");
  return (
    <div className="flex w-[165px] shrink-0 flex-col border-l border-[#e0e0e0] bg-white text-[8px] leading-none">
      <div className="flex h-[14px] shrink-0 items-center justify-between bg-[#efefef] pr-[2px] pl-[1px] text-[#444]">
        <span className="text-[8.400px] whitespace-nowrap">项目浏览器 - 260205211618</span>
        <G w={7} h={7}><path d="M0 0l7 7M7 0L0 7" stroke="#222" strokeWidth="1.300" /></G>
      </div>
      <div className="flex min-h-0 flex-1">
        <div className="-mt-[1px] min-w-0 flex-1 overflow-hidden">
          {TREE.map((n, i) => <TreeRow key={i} n={n} idx={i} famIdx={famIdx} />)}
        </div>
        <div className="flex w-[10px] shrink-0 flex-col items-center bg-[#f0f0f0]">
          <div className="flex h-[412px] w-full flex-col items-center bg-[#cdcdcd] pt-[5px]"><Chev /></div>
          <div className="flex-1" />
          <div className="flex h-[10px] items-center"><Chev up={false} /></div>
        </div>
      </div>
    </div>
  );
}

/* ---------- status ---------- */
const Field = ({ w, t }: { w: number; t?: string }) => (
  <div style={{ width: w }} className="flex h-[12px] shrink-0 items-center justify-between bg-white px-[3px] text-[8px] text-[#999]">
    <span>{t}</span><Chev up={false} c="#aaa" />
  </div>
);

function StatusBar() {
  return (
    <div className="flex h-[17px] shrink-0 items-center bg-[#d6d6d6] text-[8.200px] leading-none text-[#333]">
      <div className="w-[629px] shrink-0 pl-[1px] whitespace-nowrap">单击可进行选择; 按 Tab 键并单击可选择其他项目; 按 Ctrl 键并单击可将新项目添加到选择集; 按 Shift 键并单击可取消选择。</div>
      <G w={12} h={12}><rect x="1" y="4" width="6" height="7" stroke="#4a86c5" /><circle cx="4" cy="3" r="2" stroke="#5da04a" /><rect x="6" y="7" width="5" height="4" stroke="#888" /></G>
      <span className="w-[4px]" />
      <Field w={135} />
      <span className="w-[4px]" />
      <G w={12} h={12}><circle cx="7" cy="4" r="3" stroke="#aaa" /><path d="M5 7l-3 4" stroke="#aaa" /></G>
      <span className="ml-[5px] w-[22px]">:0</span>
      <G w={12} h={12}><rect x="1" y="1" width="10" height="10" stroke="#444" /><path d="M1 4h10M5 6v4" stroke="#444" /></G>
      <span className="w-[6px]" />
      <G w={12} h={12}><rect x="1" y="1" width="8" height="10" fill="#aaa" stroke="#999" /><path d="M3 4h4M3 6h4" stroke="#eee" /></G>
      <span className="w-[4px]" />
      <Field w={135} t="主模型" />
      <span className="w-[115px]" />
      <div className="flex items-center gap-[5px]">
        <G w={12} h={12}><circle cx="6" cy="4" r="3" fill="#e8b84b" stroke="#a98b22" /><path d="M4 8h4v3H4z" stroke="#4a86c5" /></G>
        <G w={12} h={12}><path d="M1 11V6l6-4 4 1v8z" stroke="#4a86c5" /><path d="M4 8h5" stroke="#5da04a" /></G>
        <G w={12} h={12}><path d="M4 1h5v6H4zM4 8h7v3H4z" fill="#f0b070" stroke="#b66a2b" /></G>
        <G w={12} h={12}><path d="M2 11V4l5-3v10zM7 5h4v6H7z" stroke="#4a86c5" /></G>
        <G w={12} h={12}><path d="M1 2l4 4M7 5l4 6M3 8l3 3" stroke="#333" strokeWidth="1.300" /></G>
        <G w={12} h={12}><circle cx="6" cy="6" r="3.500" stroke="#bbb" strokeWidth="1.500" strokeDasharray="2 1" /></G>
        <div className="flex items-center text-[#444]">
          <svg width="13" height="11" viewBox="0 0 13 11" fill="none" stroke="#666"><path d="M.5 .5h12L8 5.500v5L5 9V5.500z" /></svg>
          <span>:1</span>
        </div>
      </div>
    </div>
  );
}

/* ---------- taskbar ---------- */
const TB: [React.ReactNode, boolean?, boolean?][] = [
  [<svg width="16" height="16" viewBox="0 0 16 16"><circle cx="8" cy="8" r="7.500" fill="#1aa0c8" /><path d="M1 8c1-6 13-6 14 0-2-3-8-2-8 1 0 3 5 4 8 1-2 6-10 6-12 3-2-1-2-3-2-5z" fill="#0e6fbd" /><path d="M9 7a3 3 0 015 2c-2 1-5 0-5-2z" fill="#55d07a" /></svg>],
  [<svg width="14" height="16" viewBox="0 0 14 16"><path d="M1 4h12v11H1z" fill="#fafafa" /><path d="M4 4a3 3 0 016 0" fill="none" stroke="#3b8fd8" strokeWidth="1.500" /><rect x="4" y="7" width="2.500" height="2.500" fill="#e9562f" /><rect x="7.500" y="7" width="2.500" height="2.500" fill="#7cb93a" /><rect x="4" y="10" width="2.500" height="2.500" fill="#2e9fe8" /><rect x="7.500" y="10" width="2.500" height="2.500" fill="#f2b81f" /></svg>],
  [<svg width="16" height="16" viewBox="0 0 16 16"><path d="M1 6l7-5 7 5v9H1z" fill="#2b7cd3" /><path d="M3 7h10v5H3z" fill="#5db0ee" /><circle cx="5" cy="10" r="3.500" fill="#0f4e96" /><circle cx="5" cy="10" r="1.500" fill="#fff" /></svg>],
  [<svg width="16" height="16" viewBox="0 0 16 16"><path d="M11 1l4 2v10l-4 2-6-6-3 2-1-1V6l1-1 3 2zM11 5L8 8l3 3z" fill="#7e57c2" fillRule="evenodd" /></svg>],
  [<svg width="16" height="16" viewBox="0 0 16 16"><path d="M11 1l4 2v10l-4 2-6-6-3 2-1-1V6l1-1 3 2zM11 5L8 8l3 3z" fill="#2aa4ec" fillRule="evenodd" /></svg>],
  [<svg width="16" height="14" viewBox="0 0 16 14"><path d="M0 1h3l2 7 3-7 3 7 2-7h3l-4 12H9L8 9l-1 4H4z" fill="#e23a33" /></svg>, false, true],
  [<svg width="15" height="14" viewBox="0 0 15 14"><path d="M0 1h6l1 2h8v10H0z" fill="#f4c54d" /><rect x="3" y="7" width="9" height="6" fill="#52a7c9" /></svg>, false, true],
  [<svg width="14" height="16" viewBox="0 0 14 16"><rect width="14" height="16" rx="2" fill="#cc2240" /><text x="3.500" y="10" fontSize="9" fontWeight="700" fontFamily="Liberation Sans" fill="#fff">A</text></svg>],
  [<svg width="15" height="16" viewBox="0 0 15 16"><rect x=".5" width="14" height="16" rx="3" fill="#e78bb0" /><circle cx="7.500" cy="10" r="4" fill="#7ba6e0" /><circle cx="7.500" cy="10" r="1.500" fill="#fff" /><circle cx="4" cy="3" r="1.500" fill="#fff" /></svg>, false, true],
  [<svg width="14" height="16" viewBox="0 0 14 16"><rect width="14" height="16" rx="1" fill="#10336b" /><rect x="2" y="1" width="10" height="10" fill="#2a5bb0" /><text x="4" y="9" fontSize="8.500" fontWeight="700" fontFamily="Liberation Sans" fill="#fff">R</text></svg>, true, true],
  [<svg width="16" height="14" viewBox="0 0 16 14"><rect width="16" height="14" rx="3" fill="#e4323d" /><rect x="4" y="3.500" width="8" height="7" rx="3" fill="none" stroke="#fff" strokeWidth="1.500" /></svg>, false, true],
  [<svg width="16" height="14" viewBox="0 0 16 14"><rect width="16" height="14" rx="2" fill="#1f7ee0" /><rect x="3" y="4" width="6" height="6" fill="#fff" /><path d="M10 6l3-2v6l-3-2z" fill="#fff" /></svg>, false, true],
  [<svg width="16" height="15" viewBox="0 0 16 15"><rect width="16" height="15" rx="3" fill="#2fc45d" /><ellipse cx="6.500" cy="6" rx="4" ry="3.300" fill="#fff" /><ellipse cx="10.500" cy="9" rx="3.200" ry="2.600" fill="#fff" stroke="#2fc45d" strokeWidth=".6" /></svg>, false, true],
];

function Taskbar() {
  return (
    <div className="flex h-[26px] shrink-0 items-stretch bg-[#1c1c26] leading-none">
      <div className="flex w-[33px] shrink-0 items-center justify-center">
        <svg width="11" height="11" viewBox="0 0 11 11" fill="#e8e8e8"><rect width="5" height="5" /><rect x="6" width="5" height="5" /><rect y="6" width="5" height="5" /><rect x="6" y="6" width="5" height="5" /></svg>
      </div>
      <div className="flex w-[191px] shrink-0 items-center bg-[#f2f2f2] pl-[8px] text-[9.500px] text-[#444]">
        <svg width="12" height="12" viewBox="0 0 12 12" fill="none" stroke="#333"><circle cx="7" cy="5" r="3.800" /><path d="M4.300 8L1 11" /></svg>
        <span className="ml-[6px]">搜索</span>
        <svg width="44" height="22" viewBox="0 0 44 22" className="ml-[96px]"><path d="M16 1l2.500 7.500L26 11l-7.500 2.500L16 21l-2.500-7.500L6 11l7.500-2.500z" fill="#f6c644" /><path d="M31 5l1 2.500L34.500 8.500l-2.500 1L31 12l-1-2.500-2.500-1 2.500-1z" fill="#57c2c9" /><circle cx="3" cy="15" r="1.300" fill="#3b7ad8" /><path d="M34 14l.7 1.500 1.500.7-1.500.7L34 18.500l-.7-1.600-1.500-.7 1.500-.7z" fill="#7ec85a" /><circle cx="40" cy="18" r="1" fill="#57c2c9" /></svg>
      </div>
      <div className="flex">
        {TB.map(([ic, act, line], i) => (
          <div key={i} className={`flex w-[32.700px] shrink-0 items-center justify-center border-b-2 ${line ? "border-[#8fa7c0]" : "border-transparent"} ${act ? "bg-[#3c3c46]" : ""}`}>{ic}</div>
        ))}
      </div>
      <div className="ml-auto flex items-center text-[#dcdcdc]">
        <svg width="15" height="13" viewBox="0 0 15 13" fill="none" stroke="#ccc"><rect x=".5" y=".5" width="14" height="12" /><rect x="3" y="3" width="5" height="7" fill="#ccc" /><path d="M9.500 3.500h3M9.500 6h3M9.500 8.500h3" /></svg>
        <span className="ml-[6px] text-[10px]">5°C</span>
        <span className="ml-[5px] text-[9.500px] font-medium">晴朗</span>
        <span className="w-[15px]" />
        <svg width="9" height="6" viewBox="0 0 9 6" fill="none" stroke="#ddd"><path d="M.5 5.500l4-4.500 4 4.500" /></svg>
        <span className="w-[6px]" />
        <svg width="11" height="12" viewBox="0 0 11 12"><path d="M0 1h11v6L5.500 12 0 7z" fill="#d83a3f" /><rect x="5" y="6" width="5" height="5" fill="#3da5e0" /></svg>
        <span className="w-[4px]" />
        <svg width="11" height="11" viewBox="0 0 11 11" fill="none" stroke="#bbb"><path d="M1 1l9 9M1 4h3l3-3v9L4 7H1z" /></svg>
        <span className="w-[7px]" />
        <svg width="8" height="14" viewBox="0 0 8 14"><rect x="1.500" width="5" height="10" rx="2.500" fill="#e0e0e0" /><path d="M4 10v4M1 13.500h6" stroke="#e0e0e0" /></svg>
        <span className="w-[9px]" />
        <svg width="9" height="9" viewBox="0 0 9 9" fill="none" stroke="#999"><path d="M1 8c0-4 3-7 7-7M3 8c0-3 2-5 5-5M5 8c0-2 1-3 3-3" /></svg>
        <span className="w-[4px]" />
        <svg width="11" height="10" viewBox="0 0 11 10" fill="none" stroke="#ddd"><path d="M1 3.500h2l3-3v9l-3-3H1zM8 2c1.500 2 1.500 4 0 6M10 1c2 2.500 2 5.500 0 8" /></svg>
        <span className="ml-[5px] text-[10px]">中</span>
        <span className="w-[9px]" />
        <div className="flex h-[12px] w-[12px] items-center justify-center rounded-[2px] bg-[#e9762b] text-[9px] font-bold text-white">S</div>
        <div className="ml-[9px] flex w-[46px] flex-col items-center gap-[5px] text-[8.500px] whitespace-nowrap text-[#dcdcdc]">
          <span>21:24</span><span>2026-02-05</span>
        </div>
        <svg width="12" height="12" viewBox="0 0 12 12" fill="none" stroke="#ccc" className="ml-[12px]"><path d="M.5 .5h11v8.500H7L5 11.500V9H.5z" /></svg>
        <span className="w-[16px]" />
      </div>
    </div>
  );
}

export default function App() {
  return (
    <div className={`flex h-[720px] w-[1280px] flex-col overflow-hidden bg-[#f0f0f0] blur-[0.35px] ${FONT}`}>
      <TitleBar />
      <TabBar />
      <Ribbon />
      <div className="flex h-[19px] shrink-0 items-center border-t border-[#cfdcc3] bg-[#e2f0d5] pl-[5px] text-[8px] leading-none text-[#333]">修改 | 结构框架</div>
      <div className="flex min-h-0 flex-1">
        <Properties />
        <Center />
        <Browser />
      </div>
      <StatusBar />
      <Taskbar />
    </div>
  );
}
